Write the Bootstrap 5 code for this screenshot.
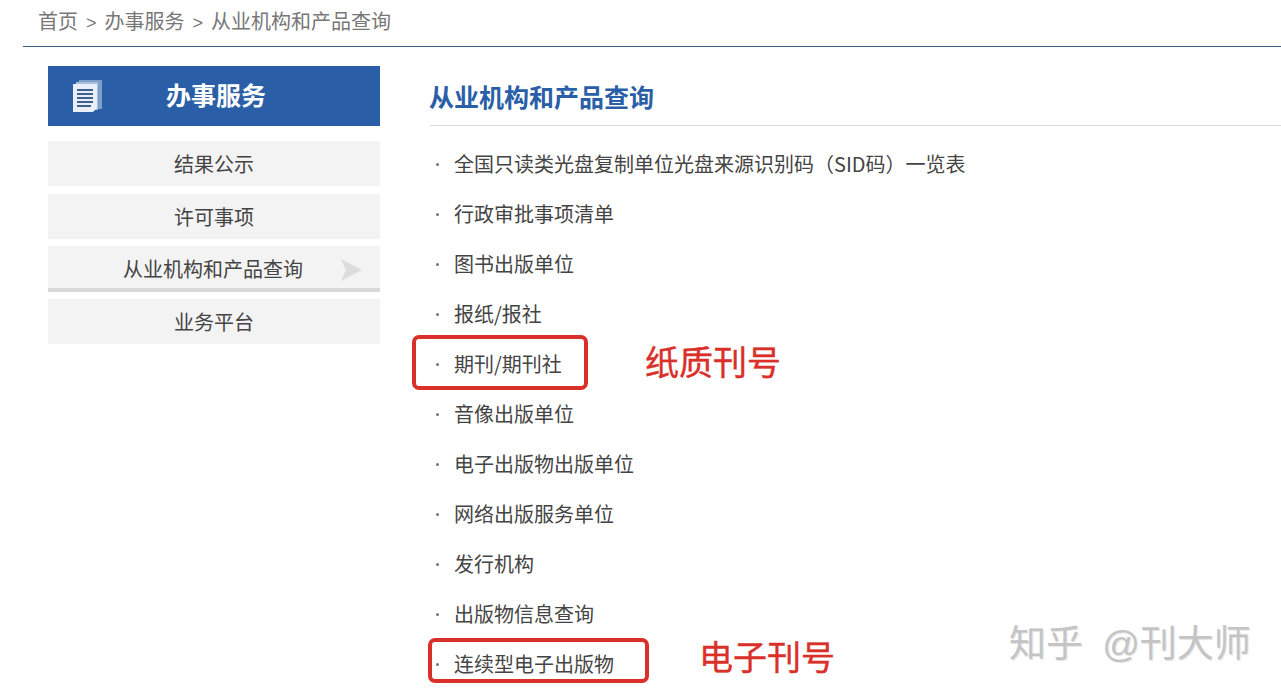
<!DOCTYPE html>
<html lang="zh-CN">
<head>
    <meta charset="UTF-8">
    <meta name="viewport" content="width=device-width, initial-scale=1.0">
    <title>从业机构和产品查询</title>
    <link rel="stylesheet" href="https://cdn.jsdelivr.net/npm/bootstrap@5.3.0/dist/css/bootstrap.min.css">
    <style>
        html, body { height: 694px; overflow: hidden; }
        body { font-family: "Liberation Sans", "Noto Sans CJK SC", sans-serif; color: #444; background: #fff; position: relative; }
        .crumbs { margin-left: 23px; height: 47px; padding: 8px 0 0 15px; border-bottom: 1px solid #3f5f7f; font-size: 20px; line-height: 28px; color: #777; }
        .crumbs span { margin: 0 8px; font-size: 18px; }
        .page-body { padding: 19px 0 0 48px; gap: 50px; }
        .side { width: 332px; flex: none; }
        .side-head { height: 60px; background: #2a5fa8; color: #fff; font-size: 25px; font-weight: 700; margin-bottom: 15px; padding-left: 118px; line-height: 61px; position: relative; }
        .side-head svg { position: absolute; left: 24px; top: 13px; }
        .side-item { height: 45px; line-height: 48px; background: #f3f3f3; text-align: center; font-size: 20px; color: #444; margin-bottom: 8px; position: relative; }
        .side-item.now { height: 46px; margin-top: -1px; border-bottom: 4px solid #d8d8d8; padding-right: 2px; margin-bottom: 7px; line-height: 49px; }
        .side-item.now svg { position: absolute; left: 293px; top: 13px; }
        .content { flex: 1; min-width: 0; }
        .content-title { height: 60px; border-bottom: 1px solid #ddd; font-size: 25px; font-weight: 700; color: #2a5fa8; line-height: 64px; margin: 0 0 13px; text-indent: -1px; }
        .doc-list { list-style: none; margin: 0; padding: 0; }
        .doc-list li { height: 50px; line-height: 50px; font-size: 20px; font-family: "Noto Sans CJK SC", sans-serif; color: #444; padding-left: 24px; position: relative; }
        .doc-list li::before { content: ""; position: absolute; left: 6px; top: 24px; width: 3px; height: 3px; background: #777; border-radius: 50%; }
        .mark-box { position: absolute; border: 4px solid #d9302a; border-radius: 7px; }
        .mark-a { left: -18px; top: -4px; width: 176px; height: 55px; }
        .mark-b { left: -2px; top: -1px; width: 221px; height: 45px; }
        .mark-text { position: absolute; color: #d9302a; font-size: 34px; font-weight: 400; -webkit-text-stroke: 0.4px #d9302a; line-height: 40px; white-space: nowrap; }
        .text-a { left: 215px; top: 2px; }
        .text-b { left: 269px; top: -3px; }
        .watermark { position: absolute; left: 1009px; top: 622px; font-size: 37px; line-height: 46px; color: #c4c4c4; white-space: nowrap; word-spacing: 9px; text-shadow: 1px 1px 0 #e4e4e4; }
    </style>
</head>
<body>
    <div class="crumbs">首页<span>&gt;</span>办事服务<span>&gt;</span>从业机构和产品查询</div>
    <div class="d-flex page-body">
        <div class="side">
            <div class="side-head">
                <svg width="32" height="34" viewBox="0 0 32 34">
                    <path d="M7 1h23v29H25V5H7z" fill="#7f9fcb"/>
                    <path d="M4 3h22v28H4z" fill="#a9bfdf"/>
                    <path d="M1 5h24v24l-4 4H1z" fill="#e9eff8"/>
                    <path d="M5 10h16v2H5zM5 14h16v2H5zM5 18h16v2H5zM5 22h16v2H5zM5 26h14v2H5z" fill="#3f5f8f"/>
                </svg>
                办事服务
            </div>
            <div class="side-item">结果公示</div>
            <div class="side-item">许可事项</div>
            <div class="side-item now">从业机构和产品查询
                <svg width="22" height="22" viewBox="0 0 22 22"><path d="M0 0l21 11L0 22l5-11z" fill="#dcdcdc"/></svg>
            </div>
            <div class="side-item">业务平台</div>
        </div>
        <div class="content">
            <h1 class="content-title">从业机构和产品查询</h1>
            <ul class="doc-list">
                <li>全国只读类光盘复制单位光盘来源识别码（SID码）一览表</li>
                <li>行政审批事项清单</li>
                <li>图书出版单位</li>
                <li>报纸/报社</li>
                <li>期刊/期刊社<div class="mark-box mark-a"></div><div class="mark-text text-a">纸质刊号</div></li>
                <li>音像出版单位</li>
                <li>电子出版物出版单位</li>
                <li>网络出版服务单位</li>
                <li>发行机构</li>
                <li>出版物信息查询</li>
                <li>连续型电子出版物<div class="mark-box mark-b"></div><div class="mark-text text-b">电子刊号</div></li>
            </ul>
        </div>
    </div>
    <div class="watermark">知乎 @刊大师</div>
    <script src="https://cdn.jsdelivr.net/npm/bootstrap@5.3.0/dist/js/bootstrap.bundle.min.js"></script>
</body>
</html>
